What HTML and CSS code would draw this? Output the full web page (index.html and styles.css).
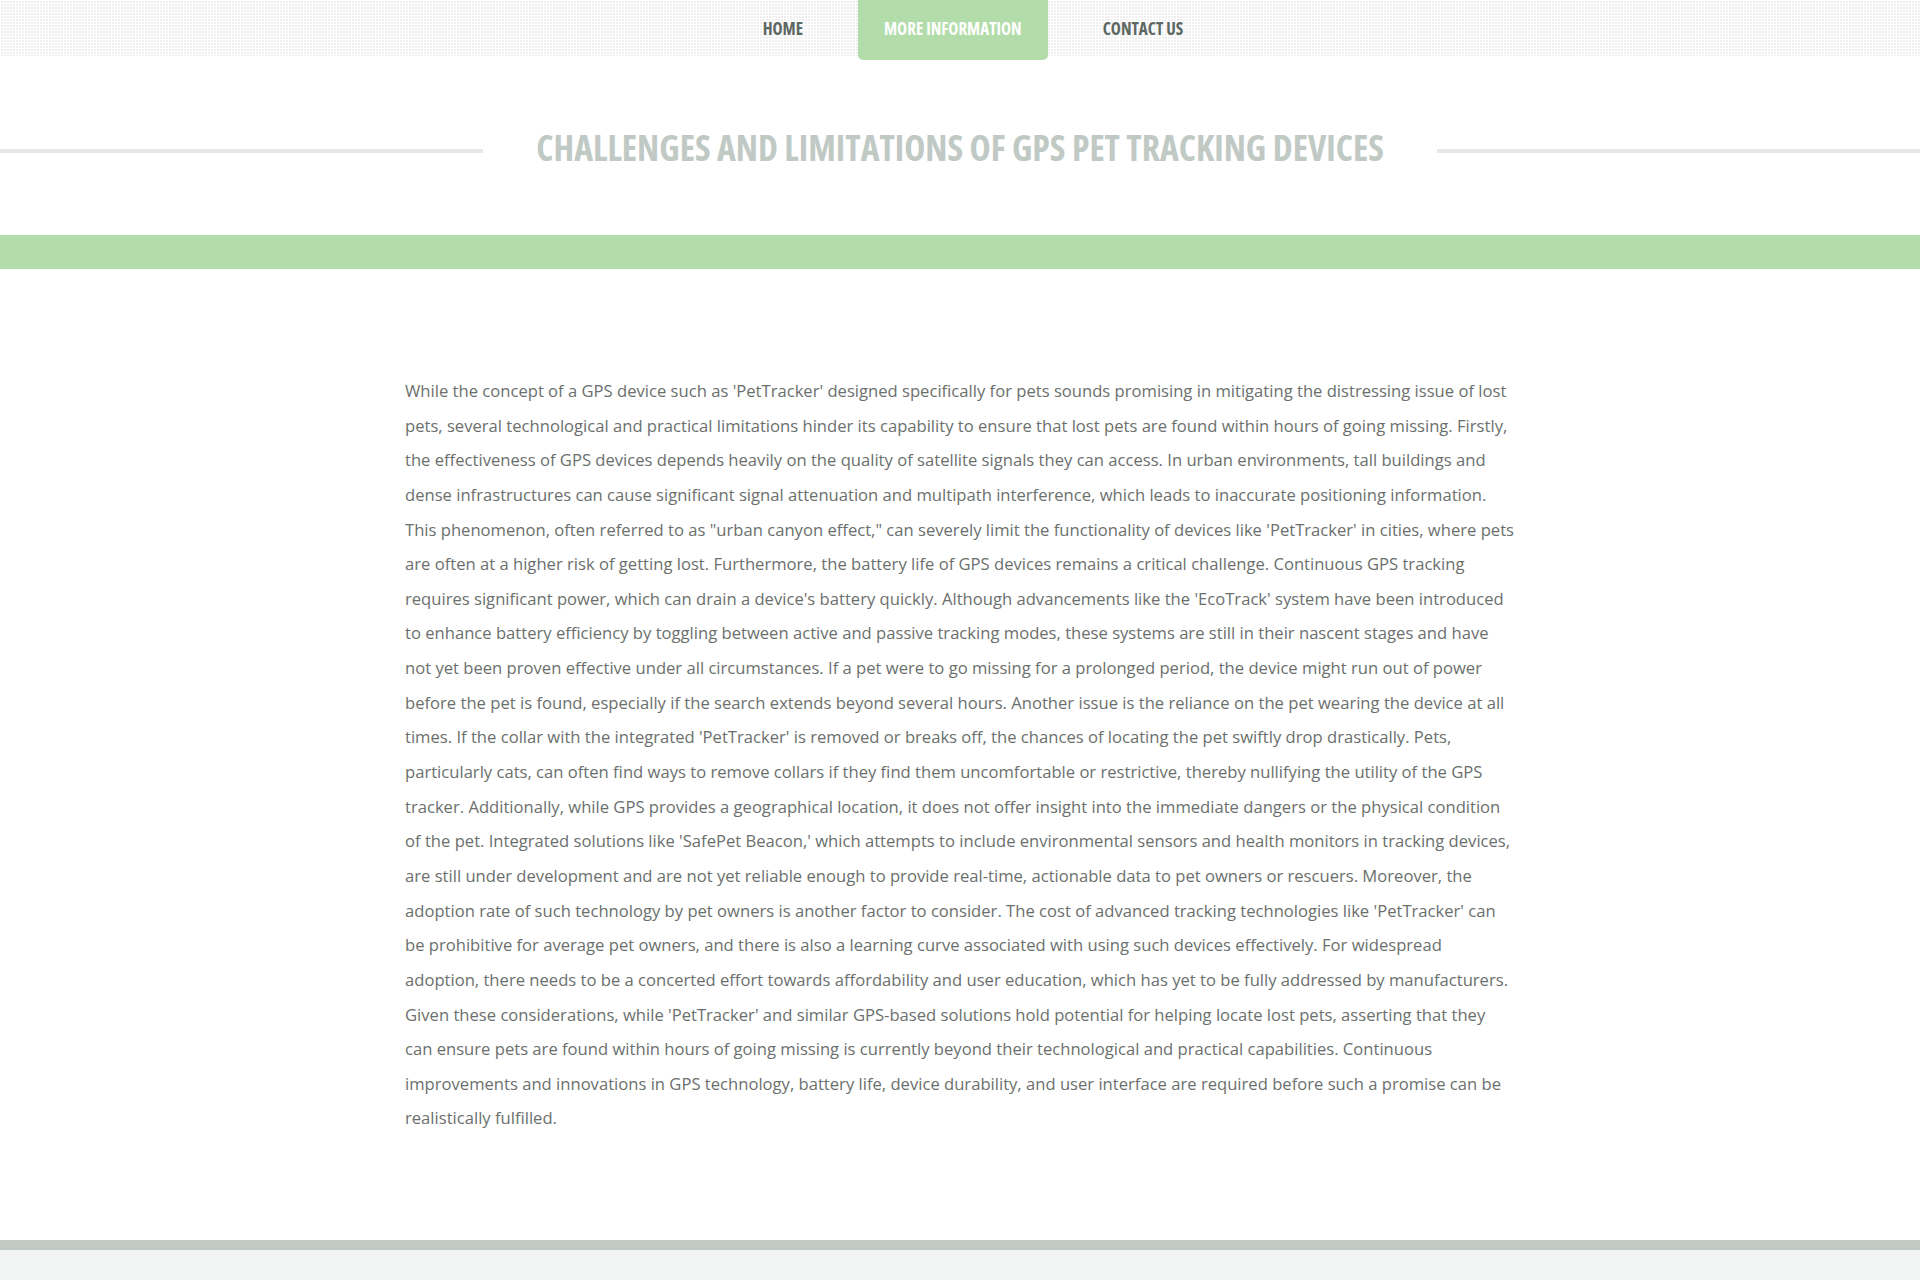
FILE: index.html
```html
<!DOCTYPE html>
<html lang="en">
<head>
<meta charset="utf-8">
<title>Challenges and Limitations of GPS Pet Tracking Devices</title>
<link rel="stylesheet" href="styles.css">
</head>
<body>
<header class="topbar">
  <nav class="nav">
    <a class="nav-item" href="#">HOME</a>
    <a class="nav-item active" href="#">MORE INFORMATION</a>
    <a class="nav-item" href="#">CONTACT US</a>
  </nav>
</header>
<section class="title-section">
  <div class="title-row">
    <span class="title-line"></span>
    <h1 class="title">CHALLENGES AND LIMITATIONS OF GPS PET TRACKING DEVICES</h1>
    <span class="title-line"></span>
  </div>
</section>
<div class="green-band"></div>
<main class="content">
  <p class="article">While the concept of a GPS device such as 'PetTracker' designed specifically for pets sounds promising in mitigating the distressing issue of lost pets, several technological and practical limitations hinder its capability to ensure that lost pets are found within hours of going missing. Firstly, the effectiveness of GPS devices depends heavily on the quality of satellite signals they can access. In urban environments, tall buildings and dense infrastructures can cause significant signal attenuation and multipath interference, which leads to inaccurate positioning information. This phenomenon, often referred to as "urban canyon effect," can severely limit the functionality of devices like 'PetTracker' in cities, where pets are often at a higher risk of getting lost. Furthermore, the battery life of GPS devices remains a critical challenge. Continuous GPS tracking requires significant power, which can drain a device's battery quickly. Although advancements like the 'EcoTrack' system have been introduced to enhance battery efficiency by toggling between active and passive tracking modes, these systems are still in their nascent stages and have not yet been proven effective under all circumstances. If a pet were to go missing for a prolonged period, the device might run out of power before the pet is found, especially if the search extends beyond several hours. Another issue is the reliance on the pet wearing the device at all times. If the collar with the integrated 'PetTracker' is removed or breaks off, the chances of locating the pet swiftly drop drastically. Pets, particularly cats, can often find ways to remove collars if they find them uncomfortable or restrictive, thereby nullifying the utility of the GPS tracker. Additionally, while GPS provides a geographical location, it does not offer insight into the immediate dangers or the physical condition of the pet. Integrated solutions like 'SafePet Beacon,' which attempts to include environmental sensors and health monitors in tracking devices, are still under development and are not yet reliable enough to provide real-time, actionable data to pet owners or rescuers. Moreover, the adoption rate of such technology by pet owners is another factor to consider. The cost of advanced tracking technologies like 'PetTracker' can be prohibitive for average pet owners, and there is also a learning curve associated with using such devices effectively. For widespread adoption, there needs to be a concerted effort towards affordability and user education, which has yet to be fully addressed by manufacturers. Given these considerations, while 'PetTracker' and similar GPS-based solutions hold potential for helping locate lost pets, asserting that they can ensure pets are found within hours of going missing is currently beyond their technological and practical capabilities. Continuous improvements and innovations in GPS technology, battery life, device durability, and user interface are required before such a promise can be realistically fulfilled.</p>
</main>
<footer class="footer">
  <div class="footer-bar"></div>
  <div class="footer-body"></div>
</footer>
</body>
</html>
```
FILE: styles.css
```css
* { box-sizing: border-box; }
html, body { margin: 0; padding: 0; }
body {
  background: #ffffff;
  font-family: "Open Sans", "Liberation Sans", sans-serif;
  color: #6b706d;
}
.topbar {
  height: 56px;
  background-color: #efefef;
  background-image:
    linear-gradient(to right, #ffffff 1px, transparent 1px),
    linear-gradient(to bottom, #ffffff 1px, transparent 1px);
  background-size: 3px 3px;
}
.nav {
  display: flex;
  justify-content: center;
  align-items: flex-start;
  gap: 29px;
  padding-left: 26px;
  height: 56px;
}
.nav-item {
  display: block;
  height: 56px;
  line-height: 58px;
  padding: 0 26px;
  font-family: "Open Sans", sans-serif;
  font-stretch: 75%;
  font-weight: 700;
  font-size: 17px;
  color: #5d6863;
  text-decoration: none;
}
.nav-item.active {
  height: 60px;
  background: #b2dcaa;
  color: #ffffff;
  border-radius: 0 0 5px 5px;
}
.title-section {
  height: 179px;
  padding-top: 71px;
}
.title-row {
  display: flex;
  align-items: center;
  gap: 53px;
}
.title-line {
  flex: 1;
  height: 4px;
  background: #e6e8e7;
}
.title {
  margin: 0;
  padding-bottom: 8px;
  font-family: "Open Sans", sans-serif;
  font-stretch: 75%;
  font-weight: 700;
  font-size: 35.7px;
  line-height: 40px;
  color: #c0c9c4;
  white-space: nowrap;
}
.green-band {
  height: 34px;
  background: #b2dcaa;
}
.content {
  width: 1110px;
  margin: 0 auto;
  padding: 105px 0 104px;
}
.article {
  margin: 0;
  font-size: 16.62px;
  line-height: 34.64px;
  color: #6b706d;
}
.footer-bar {
  height: 10px;
  background: #c0c9c4;
}
.footer-body {
  height: 30px;
  background: #f2f4f3;
}
```
